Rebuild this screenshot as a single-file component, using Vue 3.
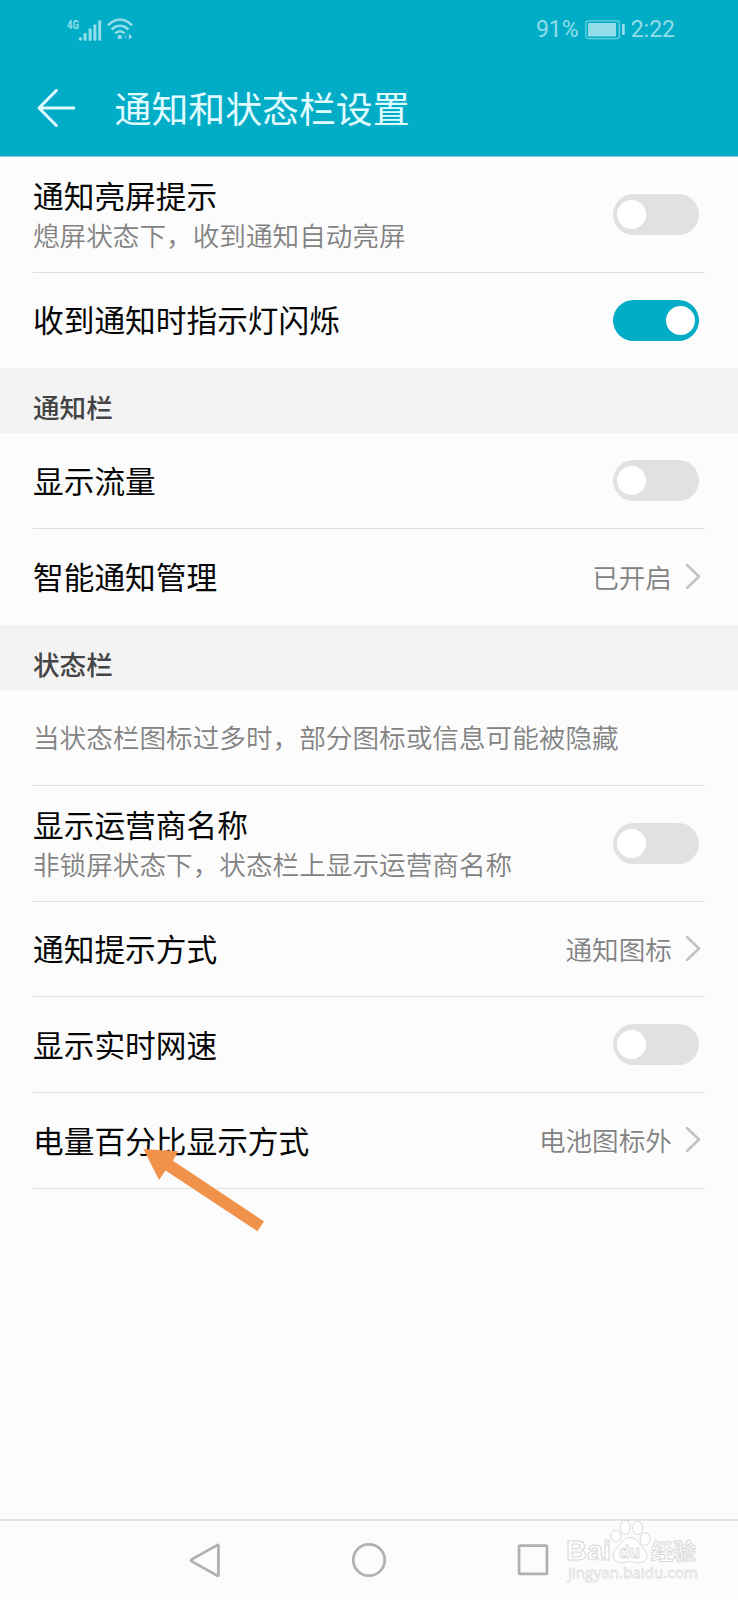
<template>
  <div class="screen">
    <header class="app-header">
      <div class="status-bar">
        <div class="status-left">
          <svg class="signal-icon" width="35" height="26" viewBox="0 -2 35 26">
            <text class="network-label" x="0" y="10.2" textLength="12" lengthAdjust="spacingAndGlyphs">4G</text>
            <circle cx="13.4" cy="19.9" r="1.8" />
            <rect x="16.6" y="14" width="3" height="7.7" rx="0.8" />
            <rect x="21.6" y="9.5" width="3" height="12.2" rx="0.8" />
            <rect x="26.4" y="5.5" width="3" height="16.2" rx="0.8" />
            <rect x="31.2" y="1.3" width="3" height="20.4" rx="0.8" />
          </svg>
          <svg class="wifi-icon" width="26" height="24" viewBox="0 0 26 24">
            <g fill="none" stroke-width="2.5">
              <path d="M1 7.4C8 0 18 0 25 7.4" />
              <path d="M4.6 11.6c5-5 11.8-5 16.8 0" />
              <path d="M8.3 15.4c3-2.8 6.4-2.8 9.4 0" />
            </g>
            <circle cx="12.8" cy="19" r="2.3" />
            <path class="wifi-down" d="M19.8 16v5.2l-3.2-2.6z" />
            <path class="wifi-up" d="M21.8 15.8v5.8l3.6-2.9z" />
          </svg>
        </div>
        <div class="status-right">
          <span class="battery-text">91%</span>
          <svg class="battery-icon" width="41" height="20" viewBox="0 0 41 20">
            <rect class="battery-frame" x="0.8" y="0.8" width="33.6" height="17.8" rx="2.5" />
            <rect x="3" y="3" width="28" height="13.4" rx="0.5" />
            <rect x="37" y="4" width="2.8" height="11" rx="1" />
          </svg>
          <span class="clock">2:22</span>
        </div>
      </div>
      <div class="title-bar">
        <svg class="back-icon" width="38" height="38" viewBox="0 0 38 38">
          <path d="M19.3 1.5L2 19l17.3 17.5M2 19h35" />
        </svg>
        <h1 class="page-title">通知和状态栏设置</h1>
      </div>
    </header>

    <main class="content">
      <section v-for="(group, index) in groups" :key="`group-${index}`">
        <h2 v-if="group.title" class="group-title">{{ group.title }}</h2>
        <div class="group-rows">
          <div
            v-for="item in group.items"
            :key="item.title || item.note"
            class="row"
            :class="{ 'row-tall': item.summary }"
            @click="onRowClick(item)"
          >
            <p v-if="item.note" class="row-note">{{ item.note }}</p>
            <div v-else class="row-text">
              <p class="row-title">{{ item.title }}</p>
              <p v-if="item.summary" class="row-summary">{{ item.summary }}</p>
            </div>
            <span v-if="item.type === 'switch'" class="switch" :class="{ on: item.on }">
              <span class="switch-knob"></span>
            </span>
            <div v-if="item.type === 'link'" class="row-link">
              <span class="row-value">{{ item.value }}</span>
              <svg class="chevron" width="16" height="28" viewBox="0 0 16 28">
                <path d="M2 2L14 13.5 2 25" />
              </svg>
            </div>
          </div>
        </div>
      </section>
    </main>

    <svg class="pointer" width="124" height="84" viewBox="0 0 124 84">
      <path d="M0.5 1L35 3.3l-5 9.5L121 73.4 114.5 83.3 22.5 22.5 16 32z" />
    </svg>

    <nav class="nav-bar">
      <svg width="36" height="36" viewBox="0 0 36 36">
        <path d="M30.2 3.2Q31.4 2.3 31.4 3.5V33.1Q31.4 34.3 30.2 33.6L4.8 19.4Q3.2 18.4 4.8 17.4z" />
      </svg>
      <svg width="36" height="36" viewBox="0 0 36 36">
        <circle cx="18" cy="18" r="15.7" />
      </svg>
      <svg width="36" height="36" viewBox="0 0 36 36">
        <rect x="4" y="3.7" width="28" height="28.2" rx="1.2" />
      </svg>
    </nav>

    <svg class="watermark" width="142" height="70" viewBox="0 0 142 70">
      <text class="mark-brand" x="6" y="45" textLength="45" lengthAdjust="spacingAndGlyphs">Bai</text>
      <g class="mark-paw">
        <ellipse cx="56" cy="21" rx="5" ry="6" />
        <ellipse cx="65.3" cy="12.5" rx="5" ry="7" />
        <ellipse cx="77.5" cy="13" rx="5" ry="6.6" />
        <ellipse cx="85" cy="24" rx="5" ry="6.3" />
        <path d="M70 22.5C77 22.5 79 29 84 34C89 39 88 47 80 47.5C75 48 73 46.5 70 46.5C67 46.5 65 48 60 47.5C53 47 51 39 56 34C61 29 63 22.5 70 22.5Z" />
      </g>
      <text class="mark-du" x="59" y="43" textLength="21" lengthAdjust="spacingAndGlyphs">du</text>
      <text class="mark-cn" x="91" y="44" textLength="45" lengthAdjust="spacingAndGlyphs">经验</text>
      <text class="mark-url" x="8" y="63" textLength="130" lengthAdjust="spacingAndGlyphs">jingyan.baidu.com</text>
    </svg>
  </div>
</template>

<script setup>
import { ref } from "vue"

const groups = ref([
  {
    title: "",
    items: [
      { title: "通知亮屏提示", summary: "熄屏状态下，收到通知自动亮屏", type: "switch", on: false },
      { title: "收到通知时指示灯闪烁", type: "switch", on: true },
    ],
  },
  {
    title: "通知栏",
    items: [
      { title: "显示流量", type: "switch", on: false },
      { title: "智能通知管理", type: "link", value: "已开启" },
    ],
  },
  {
    title: "状态栏",
    items: [
      { note: "当状态栏图标过多时，部分图标或信息可能被隐藏" },
      { title: "显示运营商名称", summary: "非锁屏状态下，状态栏上显示运营商名称", type: "switch", on: false },
      { title: "通知提示方式", type: "link", value: "通知图标" },
      { title: "显示实时网速", type: "switch", on: false },
      { title: "电量百分比显示方式", type: "link", value: "电池图标外" },
    ],
  },
])

function onRowClick(item) {
  if (item.type === "switch") {
    item.on = !item.on
  }
}
</script>

<style>
body {
  margin: 0;
  background: #fcfcfc;
}
</style>

<style scoped>
.screen {
  position: relative;
  display: flex;
  flex-direction: column;
  width: 738px;
  height: 1600px;
  overflow: hidden;
  background: #fcfcfc;
  color: #060606;
  font-family: "Noto Sans CJK SC", sans-serif;
}

h1,
h2,
p {
  margin: 0;
  font-weight: 400;
}

.app-header {
  height: 155.6px;
  background: #00acc6;
  border-bottom: 1px solid #8fcfda;
  box-sizing: content-box;
}

.status-bar {
  display: flex;
  justify-content: space-between;
  height: 59px;
  padding: 0 63px 0 67px;
  color: #93dde8;
  fill: #93dde8;
}

.status-left,
.status-right {
  display: flex;
  align-items: center;
}

.wifi-icon {
  margin-left: 5px;
}

.wifi-icon g {
  stroke: #93dde8;
}

.wifi-down {
  opacity: 0.4;
}

.network-label {
  font: 700 12px Roboto, sans-serif;
}

.battery-text,
.clock {
  padding-top: 1px;
  font-family: Roboto, sans-serif;
  font-size: 23px;
  line-height: 30px;
}

.battery-icon {
  margin: 0 5px 0 6px;
}

.battery-frame {
  fill: none;
  stroke: #6fd0de;
  stroke-width: 1.3;
}

.title-bar {
  display: flex;
  align-items: center;
  height: 97px;
  padding-left: 37px;
}

.back-icon {
  fill: none;
  stroke: #e0fbff;
  stroke-width: 3;
  stroke-linecap: round;
  stroke-linejoin: round;
}

.page-title {
  margin-left: 39.5px;
  padding-bottom: 1px;
  color: #e0fbff;
  font-size: 36.9px;
  line-height: 54px;
}

.content {
  flex: 1;
}

.group-title {
  height: 65px;
  padding: 15px 33px 0;
  box-sizing: border-box;
  background: #f3f3f3;
  color: #444;
  font-size: 26.6px;
  font-weight: 500;
  line-height: 48px;
}

.group-rows {
  padding: 0 33px;
}

.row {
  display: flex;
  align-items: center;
  justify-content: space-between;
  height: 95.7px;
  box-sizing: border-box;
  border-bottom: 1px solid #e0e0e0;
}

.row-tall {
  height: 116.2px;
}

section:not(:last-child) .row:last-child {
  border-bottom-color: transparent;
}

.row-text {
  padding-bottom: 1.5px;
}

.row-title {
  font-size: 30.7px;
  line-height: 44px;
}

.row-summary,
.row-note,
.row-value {
  color: #828282;
  font-size: 26.64px;
  font-weight: 350;
  line-height: 36px;
}

.switch {
  display: flex;
  width: 86px;
  height: 41px;
  margin-right: 6px;
  padding: 0 4px;
  box-sizing: border-box;
  align-items: center;
  border-radius: 21px;
  background: #e1e1e1;
}

.switch.on {
  justify-content: flex-end;
  background: #00acc6;
}

.switch-knob {
  width: 29px;
  height: 29px;
  border-radius: 50%;
  background: #fff;
}

.row-link {
  display: flex;
  align-items: center;
  margin-right: 4px;
}

.chevron {
  margin-left: 13px;
  fill: none;
  stroke: #c3c3c3;
  stroke-width: 2.5;
  stroke-linecap: round;
  stroke-linejoin: round;
}

.pointer {
  position: absolute;
  left: 143px;
  top: 1148px;
  fill: #f1924b;
}

.nav-bar {
  display: flex;
  flex: 0 0 81px;
  align-items: center;
  justify-content: center;
  gap: 128px;
  padding-bottom: 2px;
  box-sizing: border-box;
  border-top: 2px solid #e5e5e5;
  fill: none;
  stroke: #b0b0b0;
  stroke-width: 2.7;
}

.watermark {
  position: absolute;
  left: 560px;
  top: 1515px;
  fill: #fff;
  stroke: #dadada;
  stroke-width: 1;
}

.mark-brand {
  font: 700 27px "Liberation Sans", sans-serif;
}

.mark-du {
  font: 700 19px "Liberation Sans", sans-serif;
}

.mark-cn {
  font: 700 22px "Noto Sans CJK SC", sans-serif;
}

.mark-url {
  font: 400 15px "Open Sans", sans-serif;
  stroke: #e2e2e2;
  stroke-width: 0.8;
}
</style>
